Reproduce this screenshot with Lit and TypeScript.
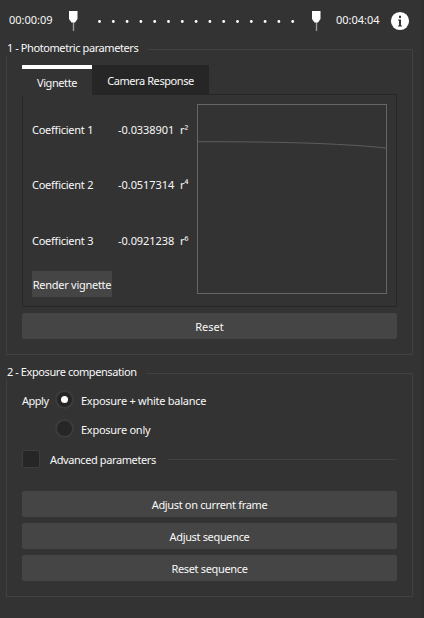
import { LitElement, html, css, svg } from "lit";
import { customElement } from "lit/decorators.js";

const COEFFICIENTS = [
  { name: "Coefficient 1", value: "-0.0338901", term: "r²" },
  { name: "Coefficient 2", value: "-0.0517314", term: "r⁴" },
  { name: "Coefficient 3", value: "-0.0921238", term: "r⁶" },
];

@customElement("app-root")
export class AppRoot extends LitElement {
  static styles = css`
    :host {
      display: flex;
      flex-direction: column;
      box-sizing: border-box;
      width: 424px;
      height: 618px;
      background: #333;
      border-right: 3px solid #2f2f2f;
      color: #f8f8f8;
      font: 11px/14px "Noto Sans", "Open Sans", sans-serif;
      white-space: nowrap;
      overflow: hidden;
    }
    .range { display: flex; align-items: center; height: 41px; padding-left: 9px; box-sizing: border-box; }
    .time { width: 44px; margin-top: -1px; }
    .track { display: block; width: 283px; height: 41px; }
    .info { display: block; width: 20px; height: 20px; margin: 1px 0 0 10px; }
    .group { display: flex; flex-direction: column; width: 407px; margin-left: 6px; box-sizing: border-box; }
    .title { display: flex; align-items: flex-start; height: 14px; padding-left: 1px; gap: 9px; letter-spacing: -0.42px; }
    .title .rule { flex: 1; box-sizing: border-box; height: 6px; margin-top: 8px; border: solid #414141; border-width: 1px 1px 0 0; }
    .body { flex: 1; border: 1px solid #414141; border-top: 0; box-sizing: border-box; padding: 0 15px; display: flex; flex-direction: column; }
    .one .body { padding-top: 10px; }
    .one { height: 314px; }
    .two .body { padding-top: 7px; }
    .two { height: 232px; margin-top: 10px; }
    .tabs { display: flex; height: 30px; }
    .tab { box-sizing: border-box; text-align: center; letter-spacing: -0.42px; }
    .on { width: 70px; height: 31px; border-top: 4px solid #fff; background: #333; padding-top: 7px; z-index: 1; }
    .off { width: 117px; height: 29px; background: #262626; padding-top: 9px; }
    .pane { display: flex; box-sizing: border-box; width: 375px; height: 213px; margin-top: -1px; border: 1px solid #272727; padding: 9px; justify-content: space-between; }
    .fields { display: flex; flex-direction: column; width: 160px; }
    .coef { display: flex; height: 14px; margin: 19px 0 22.4px; }
    .coef .name { width: 86px; letter-spacing: -0.25px; }
    .coef .value { width: 62px; letter-spacing: -0.05px; }
    .plot { display: block; width: 190px; height: 190px; }
    .btn { display: block; box-sizing: border-box; height: 26px; width: 375px; border: 0; border-radius: 2px; padding: 2px 0 0; background: #454545; color: inherit; font: inherit; text-align: center; letter-spacing: -0.34px; }
    .render { width: 80px; border-radius: 0; margin-top: 1px; letter-spacing: -0.27px; }
    .reset { margin-top: 6px; letter-spacing: 0; }
    .choice { display: flex; align-items: center; height: 29px; letter-spacing: -0.26px; }
    .apply { width: 33px; letter-spacing: -0.5px; }
    .dot { width: 19px; height: 19px; box-sizing: border-box; border: 2px solid #3c3c3c; border-radius: 50%; background: #262626; display: flex; align-items: center; justify-content: center; margin: -2px 7px 0 0; }
    .dot.sel::after { content: ""; width: 7px; height: 7px; border-radius: 50%; background: #fff; }
    .advanced { display: flex; align-items: center; height: 18px; margin-top: 6px; letter-spacing: -0.4px; }
    .advanced span { margin-top: 1px; }
    .box { width: 18px; height: 18px; box-sizing: border-box; border: 1px solid #3d3d3d; border-radius: 2px; background: #262626; margin-right: 10px; }
    .advanced .rule { flex: 1; height: 1px; background: #414141; margin-left: 12px; }
    .actions { display: flex; flex-direction: column; gap: 6px; margin-top: 23px; }
  `;

  private handle(x: number) {
    return svg`<path d="M${x + 0.5} 22v9" stroke="#999" stroke-width="1.4"/>
      <path d="M${x - 4} 11h8.5v8l-2.5 3.5h-3.5l-2.5 -3.5z" fill="#fff"/>`;
  }

  render() {
    return html`
      <div class="range">
        <span class="time">00:00:09</span>
        <svg class="track" viewBox="53 0 283 41">
          ${this.handle(73)}
          ${Array.from({ length: 15 }, (_, i) => svg`<circle cx=${99.5 + i * 13.8} cy="21.5" r="1.4" fill="#fff"/>`)}
          ${this.handle(316)}
        </svg>
        <span class="time">00:04:04</span>
        <svg class="info" viewBox="0 0 20 20">
          <circle cx="10" cy="10" r="9.1" fill="#fff"/>
          <path d="M9 4.8h2v2.2h-2zM8 8.4h3v6h1v1.2h-4v-1.2h1v-4.8h-1z" fill="#333"/>
        </svg>
      </div>

      <section class="group one">
        <div class="title"><span>1 - Photometric parameters</span><i class="rule"></i></div>
        <div class="body">
          <div class="tabs">
            <div class="tab on">Vignette</div>
            <div class="tab off">Camera Response</div>
          </div>
          <div class="pane">
            <div class="fields">
              ${COEFFICIENTS.map(
                (c) => html`<div class="coef"><span class="name">${c.name}</span><span class="value">${c.value}</span><span>${c.term}</span></div>`
              )}
              <button class="btn render">Render vignette</button>
            </div>
            <svg class="plot" viewBox="0 0 190 190">
              <rect x=".5" y=".5" width="189" height="189" fill="none" stroke="#666"/>
              <path d="M1 37.7C80 37.7 140 39 189 44" fill="none" stroke="#5c5c5c"/>
            </svg>
          </div>
          <button class="btn reset">Reset</button>
        </div>
      </section>

      <section class="group two">
        <div class="title"><span>2 - Exposure compensation</span><i class="rule"></i></div>
        <div class="body">
          <div class="choice"><span class="apply">Apply</span><i class="dot sel"></i><span>Exposure + white balance</span></div>
          <div class="choice"><span class="apply"></span><i class="dot"></i><span>Exposure only</span></div>
          <div class="advanced"><i class="box"></i><span>Advanced parameters</span><i class="rule"></i></div>
          <div class="actions">
            <button class="btn">Adjust on current frame</button>
            <button class="btn">Adjust sequence</button>
            <button class="btn">Reset sequence</button>
          </div>
        </div>
      </section>
    `;
  }
}
